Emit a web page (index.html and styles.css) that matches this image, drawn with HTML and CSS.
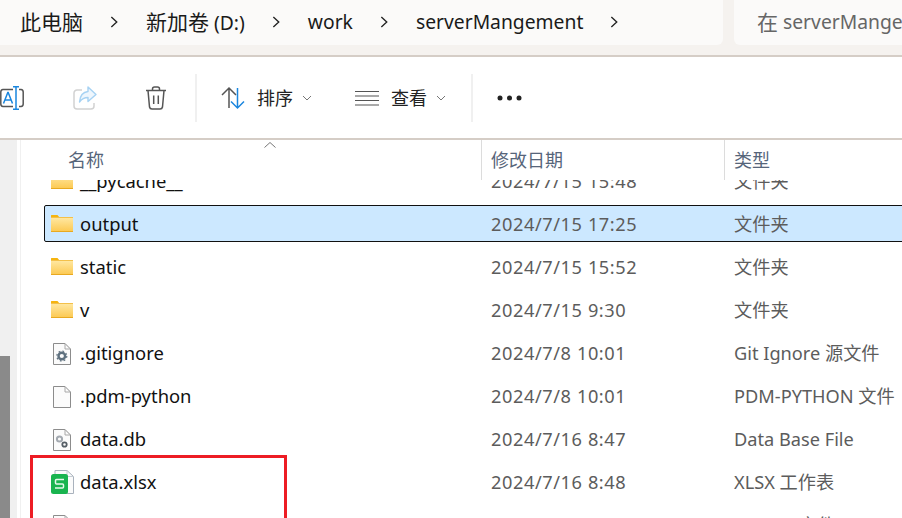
FILE: index.html
```html
<!DOCTYPE html>
<html lang="zh-CN">
<head>
<meta charset="utf-8">
<title>serverMangement</title>
<link rel="stylesheet" href="styles.css">
</head>
<body>
<svg class="defs" width="0" height="0" aria-hidden="true">
  <defs>
    <linearGradient id="fg" x1="0" y1="0" x2="0" y2="1">
      <stop offset="0" stop-color="#ffe9a6"/>
      <stop offset="1" stop-color="#fcc84f"/>
    </linearGradient>
    <symbol id="folder" viewBox="0 0 23 25">
      <path d="M0 4.500a.5.5 0 0 1 .5-.5h6l2 2.500H0z" fill="#f6b40e"/>
      <rect x="0" y="6" width="22" height="15" fill="url(#fg)"/>
      <rect x="0" y="6" width="22" height="1" fill="#f3c04a"/>
      <rect x="0" y="20" width="22" height="1" fill="#e8a921"/>
    </symbol>
    <symbol id="page" viewBox="0 0 23 25">
      <path d="M2.500 3.500H14l5.500 5.500v15.500h-17z" fill="#fbfbfb" stroke="#8c8c8c"/>
      <path d="M14 3.500V9h5.500" fill="none" stroke="#a8a8a8"/>
    </symbol>
    <symbol id="chev" viewBox="0 0 10 14">
      <path d="M1.500 1.500 7.500 7l-6 5.500" fill="none" stroke="#222" stroke-width="1.500"/>
    </symbol>
    <symbol id="down" viewBox="0 0 10 6">
      <path d="M1 1l4 4 4-4" fill="none" stroke="#777" stroke-width="1"/>
    </symbol>
  </defs>
</svg>

<header class="address">
  <nav class="crumbs">
    <span class="cjk">此电脑</span><svg class="chev"><use href="#chev"/></svg>
    <span><span class="cjk">新加卷</span> (D:)</span><svg class="chev"><use href="#chev"/></svg>
    <span>work</span><svg class="chev"><use href="#chev"/></svg>
    <span>serverMangement</span><svg class="chev"><use href="#chev"/></svg>
  </nav>
  <div class="search"><span class="cjk">在</span>&nbsp;serverMangement</div>
</header>

<section class="toolbar">
  <svg class="tool tool-rename" viewBox="0 0 24 24">
    <path d="M13 3.500H3A2.500 2.500 0 0 0 .8 6v12A2.500 2.500 0 0 0 3 20.500h10" fill="none" stroke="#555" stroke-width="1.500"/>
    <path d="M19 3.500h2A2.500 2.500 0 0 1 23.200 6v12a2.500 2.500 0 0 1-2.200 2.500h-2" fill="none" stroke="#555" stroke-width="1.500"/>
    <path d="M3.500 17.500 7.800 6.500h.4L12.500 17.500M5 14h6" fill="none" stroke="#1a86de" stroke-width="1.500"/>
    <path d="M16 0.800v22.400M13 0.800h6M13 23.200h6" fill="none" stroke="#1a86de" stroke-width="1.500"/>
  </svg>
  <svg class="tool tool-share" viewBox="0 0 24 24">
    <path d="M9 4H4a3 3 0 0 0-3 3v13a3 3 0 0 0 3 3h14a3 3 0 0 0 3-3v-3" fill="none" stroke="#d2d2d2" stroke-width="1.500"/>
    <path d="M15 1l8 7.500-8 7v-4c-4 0-6 1-8.500 4.500C7 10 10 6 15 5.500z" fill="#eef6fd" stroke="#a6d2f3" stroke-width="1.400" stroke-linejoin="round"/>
  </svg>
  <svg class="tool tool-trash" viewBox="0 0 22 24">
    <path d="M1 4.500h20M7.500 4.500V3a2 2 0 0 1 2-2h3a2 2 0 0 1 2 2v1.500M3 4.500l1.500 16.500a2.500 2.500 0 0 0 2.500 2h8a2.500 2.500 0 0 0 2.500-2L19 4.500M8.700 9.500v8.500M13.300 9.500v8.500" fill="none" stroke="#555" stroke-width="1.500"/>
  </svg>
  <span class="sep sep-a"></span>
  <svg class="tool tool-sort" viewBox="0 0 24 24">
    <path d="M8 22V2M1 9l7-7 7 7" fill="none" stroke="#555" stroke-width="1.500"/>
    <path d="M16.500 2v20M10 15.500l6.500 6.500 6.500-6.500" fill="none" stroke="#1a86de" stroke-width="1.500"/>
  </svg>
  <span class="tool-label">排序</span>
  <svg class="caret"><use href="#down"/></svg>
  <svg class="tool tool-view" viewBox="0 0 24 24">
    <path d="M0 5.500h24M0 10h24M0 14.500h24M0 19h24" fill="none" stroke="#555" stroke-width="1.200"/>
  </svg>
  <span class="tool-label">查看</span>
  <svg class="caret"><use href="#down"/></svg>
  <span class="sep sep-b"></span>
  <svg class="tool tool-more" viewBox="0 0 25 6">
    <circle cx="3" cy="3" r="2.500" fill="#222"/>
    <circle cx="12.500" cy="3" r="2.500" fill="#222"/>
    <circle cx="22" cy="3" r="2.500" fill="#222"/>
  </svg>
</section>

<main class="content">
  <aside class="nav-strip"><div class="thumb"></div></aside>
  <div class="files">
    <div class="columns">
      <div class="col col-name">名称</div>
      <div class="col col-line">修改日期</div>
      <div class="col col-line">类型</div>
    </div>
    <div class="list">
      <div class="rows">
        <div class="row"><div class="name"><svg class="ficon"><use href="#folder"/></svg>__pycache__</div><div class="meta date">2024/7/15 15:48</div><div class="meta">文件夹</div></div>
        <div class="row selected"><div class="name"><svg class="ficon"><use href="#folder"/></svg>output</div><div class="meta date">2024/7/15 17:25</div><div class="meta">文件夹</div></div>
        <div class="row"><div class="name"><svg class="ficon"><use href="#folder"/></svg>static</div><div class="meta date">2024/7/15 15:52</div><div class="meta">文件夹</div></div>
        <div class="row"><div class="name"><svg class="ficon"><use href="#folder"/></svg>v</div><div class="meta date">2024/7/15 9:30</div><div class="meta">文件夹</div></div>
        <div class="row"><div class="name"><svg class="ficon" viewBox="0 0 23 25"><use href="#page" width="23" height="25"/><circle cx="10.800" cy="16" r="3.300" fill="none" stroke="#5f717f" stroke-width="2.400"/><circle cx="10.800" cy="16" r="5" fill="none" stroke="#5f717f" stroke-width="1.200" stroke-dasharray="1.800 2.120"/></svg>.gitignore</div><div class="meta date">2024/7/8 10:01</div><div class="meta">Git Ignore 源文件</div></div>
        <div class="row"><div class="name"><svg class="ficon"><use href="#page"/></svg>.pdm-python</div><div class="meta date">2024/7/8 10:01</div><div class="meta">PDM-PYTHON 文件</div></div>
        <div class="row"><div class="name"><svg class="ficon" viewBox="0 0 23 25"><use href="#page" width="23" height="25"/><circle cx="8.500" cy="13" r="2.600" fill="none" stroke="#a3a9b0" stroke-width="2"/><circle cx="13.500" cy="18.500" r="2.200" fill="none" stroke="#555e66" stroke-width="1.800"/></svg>data.db</div><div class="meta date">2024/7/16 8:47</div><div class="meta">Data Base File</div></div>
        <div class="row"><div class="name"><svg class="ficon" viewBox="0 0 23 25"><path d="M4 1.500H16l6.500 6v17H4z" fill="#fbfbfb" stroke="#a9b2bd"/><path d="M16 1.500V7.500h6.500" fill="none" stroke="#c5ccd3"/><rect x="0" y="5" width="17" height="20" rx="2.500" fill="#19b44f"/><path d="M13 10.500H5.500a1 1 0 0 0-1 1v2.500a1 1 0 0 0 1 1h6a1 1 0 0 1 1 1v2a1 1 0 0 1-1 1H4" fill="none" stroke="#e6f8ec" stroke-width="1.500"/></svg>data.xlsx</div><div class="meta date">2024/7/16 8:48</div><div class="meta">XLSX 工作表</div></div>
        <div class="row"><div class="name"><svg class="ficon"><use href="#page"/></svg></div><div class="meta date"></div><div class="meta">Python 文件</div></div>
      </div>
    </div>
  </div>
  <svg class="sort-arrow" viewBox="0 0 12 6"><path d="M.5 5.500 6 .5l5.500 5" fill="none" stroke="#777"/></svg>
</main>
<div class="annotation"></div>
</body>
</html>
```
FILE: styles.css
```css
* { box-sizing: border-box; }
html, body { margin: 0; height: 100%; overflow: hidden; background: #fff; }
body {
  display: flex;
  flex-direction: column;
  position: relative;
  font-family: "Noto Sans", "Noto Sans CJK SC", sans-serif;
  font-size: 18px;
  color: #1a1a1a;
}
.defs { position: absolute; }
.cjk { font-size: 21px; }

.address {
  flex: none;
  height: 57px;
  display: flex;
  gap: 11px;
  background: #f5f2ef;
  border-bottom: 2px solid #d5cdc6;
  overflow: hidden;
  font-size: 19.3px;
}
.crumbs {
  flex: none;
  width: 723px;
  height: 45px;
  padding: 0 0 3px 20px;
  display: flex;
  align-items: center;
  gap: 27px;
  background: #fbfaf9;
  border-bottom-right-radius: 6px;
  white-space: nowrap;
}
.chev { width: 9px; height: 14px; flex: none; margin-top: 1px; }
.search {
  flex: none;
  width: 300px;
  height: 45px;
  padding: 0 0 3px 23px;
  display: flex;
  align-items: center;
  background: #fbfaf9;
  border-bottom-left-radius: 6px;
  color: #666;
  white-space: nowrap;
}

.toolbar {
  flex: none;
  height: 83px;
  display: flex;
  align-items: center;
  background: #fff;
  border-bottom: 2px solid #d5cdc6;
}
.tool { flex: none; width: 24px; height: 24px; }
.tool-share { margin-left: 49px; }
.tool-trash { margin-left: 48px; width: 22px; }
.sep { flex: none; width: 2px; height: 48px; background: #f0f0f0; }
.sep-a { margin-left: 28px; }
.tool-sort { margin-left: 24px; }
.tool-label { margin-left: 12px; font-size: 18px; color: #222; line-height: 24px; }
.caret { flex: none; width: 10px; height: 6px; margin-left: 9px; }
.tool-view { margin-left: 43px; }
.sep-b { margin-left: 25px; }
.tool-more { margin-left: 24px; width: 25px; height: 6px; }

.content { flex: 1; min-height: 0; display: flex; position: relative; }
.nav-strip {
  flex: none;
  width: 21px;
  padding-top: 216px;
  display: flex;
  background: linear-gradient(90deg, #f0f0f0 17px, #fff 17px, #fff 20px, #f0f0f0 20px);
}
.thumb { width: 10px; background: #8a8a8a; }
.files { flex: 1; min-width: 0; display: flex; flex-direction: column; padding-left: 23px; }

.columns {
  flex: none;
  height: 40px;
  display: grid;
  grid-template-columns: 437px 243px 1fr;
  color: #56657a;
  font-size: 18px;
}
.col { display: flex; align-items: center; padding-bottom: 2px; }
.col-name { padding-left: 24px; }
.col-line { padding-left: 9px; border-left: 1px solid #dcdcdc; }

.list { flex: 1; min-height: 0; overflow: hidden; margin-right: -12px; }
.rows { display: flex; flex-direction: column; gap: 6px; margin-top: -18px; }
.row {
  flex: none;
  height: 37px;
  display: grid;
  grid-template-columns: 446px 243px 1fr;
  align-items: center;
  border: 1px solid transparent;
  border-radius: 2px;
  color: #5c5c5c;
  white-space: nowrap;
  font-size: 18.2px;
}
.row.selected { background: #cce8ff; border-color: #111; }
.name { display: flex; align-items: center; padding-left: 6px; color: #111; font-size: 18.4px; }
.ficon { flex: none; width: 23px; height: 25px; margin-right: 6px; }
.meta { line-height: 25px; padding-top: 1px; }
.date { letter-spacing: .58px; }

.sort-arrow { position: absolute; left: 264px; top: 2px; width: 12px; height: 6px; }
.annotation {
  position: absolute;
  left: 30px;
  top: 455px;
  width: 257px;
  height: 80px;
  border: 3px solid #ed1c24;
}
```
